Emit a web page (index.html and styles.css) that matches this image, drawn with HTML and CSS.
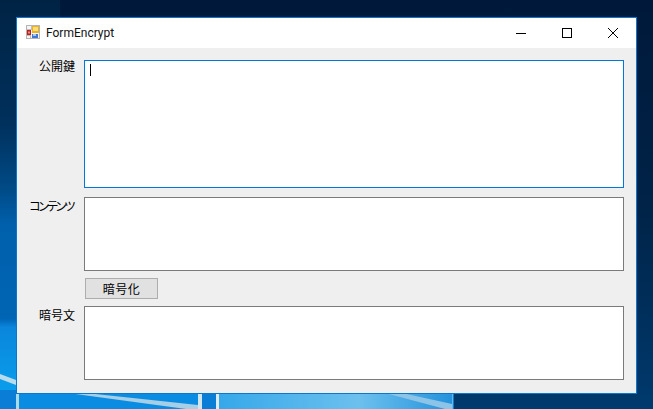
FILE: index.html
```html
<!DOCTYPE html>
<html lang="ja">
<head>
<meta charset="utf-8">
<title>FormEncrypt</title>
<link rel="stylesheet" href="styles.css">
</head>
<body>
<svg class="wallpaper" viewBox="0 0 653 409" aria-hidden="true">
  <defs>
    <linearGradient id="left" x1="0" y1="0" x2="0" y2="1">
      <stop offset="0" stop-color="#002344"/>
      <stop offset=".3" stop-color="#00305c"/>
      <stop offset=".46" stop-color="#004a86"/>
      <stop offset=".55" stop-color="#0060ac"/>
      <stop offset=".78" stop-color="#0065b4"/>
      <stop offset=".8" stop-color="#0a86dc"/>
      <stop offset="1" stop-color="#0aa4f0"/>
    </linearGradient>
    <linearGradient id="right" x1="0" y1="0" x2="0" y2="1">
      <stop offset="0" stop-color="#00193a"/>
      <stop offset=".5" stop-color="#002347"/>
      <stop offset="1" stop-color="#003a6e"/>
    </linearGradient>
    <linearGradient id="pane2" x1="0" y1="0" x2="1" y2="0">
      <stop offset="0" stop-color="#36a8ea"/>
      <stop offset=".6" stop-color="#6cc0ee"/>
      <stop offset="1" stop-color="#2492dc"/>
    </linearGradient>
  </defs>
  <rect width="653" height="409" fill="url(#right)"/>
  <rect width="60" height="409" fill="url(#left)"/>
  <rect x="0" y="390" width="454" height="19" fill="#0a7ed6"/>
  <rect x="19" y="393" width="180" height="16" fill="#0a8ce2"/>
  <rect x="219" y="393" width="234" height="16" fill="url(#pane2)"/>
  <path d="M0 374 L16 380 L16 385 L0 379 Z" fill="#b8dcec"/>
  <path d="M68 393 L86 393 L198 405 L198 409 L186 409 Z" fill="#a4cfe6"/>
  <path d="M385 393 L402 393 L452 404 L452 409 L445 409 Z" fill="#8cc4e8"/>
  <rect x="16" y="393" width="3" height="16" fill="#a9dbe8"/>
  <rect x="198" y="393" width="4" height="16" fill="#cfe6ee"/>
  <rect x="216" y="393" width="3" height="16" fill="#dcecf2"/>
  <rect x="452" y="393" width="1" height="16" fill="#6fb6dc"/>
</svg>
<main class="window">
  <header class="titlebar">
    <svg class="app-icon" viewBox="0 0 14 14" aria-hidden="true">
      <rect x=".5" y=".5" width="13" height="13" fill="#f4f4f4" stroke="#b4b4b4"/>
      <path d="M1 4.500H6M5.500 1V4M1 10.500H5M4.500 10V13" stroke="#bdbdbd" fill="none"/>
      <rect x="1" y="5" width="4" height="5" fill="#c01f1a"/>
      <rect x="2" y="6.500" width="2" height="2" fill="#e88a80"/>
      <rect x="6" y="1" width="7" height="7" fill="#e9b21f"/>
      <rect x="7" y="2" width="5" height="4" fill="#fbdc78"/>
      <rect x="6" y="9" width="6" height="4" fill="#3f78d4"/>
      <rect x="7" y="9" width="3" height="2" fill="#a8c8f0"/>
    </svg>
    <span class="title">FormEncrypt</span>
    <div class="controls">
      <svg class="control" viewBox="0 0 46 31" aria-hidden="true"><path d="M18 15.500H28" stroke="#000" fill="none"/></svg>
      <svg class="control" viewBox="0 0 46 31" aria-hidden="true"><rect x="18.500" y="10.500" width="9" height="9" stroke="#000" fill="none"/></svg>
      <svg class="control" viewBox="0 0 46 31" aria-hidden="true"><path d="M18 10L28 20M28 10L18 20" stroke="#000" stroke-width="1" fill="none"/></svg>
    </div>
  </header>
  <div class="form">
    <div class="row row-key">
      <label class="label">公開鍵</label>
      <div class="box box-focus"><span class="caret"></span></div>
    </div>
    <div class="row row-content">
      <label class="label label-low label-kana">コンテンツ</label>
      <div class="box"></div>
    </div>
    <div class="action"><button class="button" type="button">暗号化</button></div>
    <div class="row row-cipher">
      <label class="label label-low">暗号文</label>
      <div class="box"></div>
    </div>
  </div>
</main>
</body>
</html>
```
FILE: styles.css
```css
* { box-sizing: border-box; }
html, body { margin: 0; height: 100%; }
body {
  width: 653px;
  height: 409px;
  overflow: hidden;
  position: relative;
  padding: 17px 16px 0;
  background: #002347;
  font-family: "Noto Sans CJK JP", "Noto Sans", sans-serif;
}
.wallpaper { position: absolute; inset: 0; width: 653px; height: 409px; display: block; }
.window {
  position: relative;
  width: 621px;
  height: 377px;
  border: 1px solid #0a78d0;
  background: #efefef;
  display: flex;
  flex-direction: column;
}
.titlebar {
  height: 30px;
  flex: none;
  background: #fff;
  display: flex;
  align-items: center;
  padding-left: 9px;
}
.app-icon { width: 14px; height: 14px; flex: none; margin-top: -2px; }
.title {
  margin-left: 6px;
  margin-top: -1px;
  font: 12px/16px Roboto, "Noto Sans", sans-serif;
  color: #111;
}
.controls { margin-left: auto; display: flex; align-self: flex-start; }
.control { width: 46px; height: 31px; display: block; }
.form { padding: 12px 12px 0 0; display: flex; flex-direction: column; }
.row { display: flex; gap: 9px; }
.row-key { height: 128px; }
.row-content { height: 74px; margin-top: 9px; }
.row-cipher { height: 74px; }
.label {
  width: 58px;
  flex: none;
  text-align: right;
  font-size: 12px;
  line-height: 12px;
  color: #000;
  white-space: nowrap;
}
.label-low { padding-top: 3px; }
.label-kana { font-feature-settings: "palt"; letter-spacing: -2.2px; padding-right: 2px; }
.box {
  flex: 1;
  background: #fff;
  border: 1px solid #7a7a7a;
  padding: 3px 0 0 5px;
}
.box-focus { border-color: #0078d7; }
.caret { display: block; width: 1px; height: 12px; background: #000; }
.action { padding: 7px 0 0 68px; height: 35px; }
.button {
  display: block;
  width: 73px;
  height: 21px;
  padding: 0;
  background: #e1e1e1;
  border: 1px solid #adadad;
  border-radius: 0;
  color: #000;
  font: 12px/17px "Noto Sans CJK JP", sans-serif;
  letter-spacing: 0.5px;
}
```
